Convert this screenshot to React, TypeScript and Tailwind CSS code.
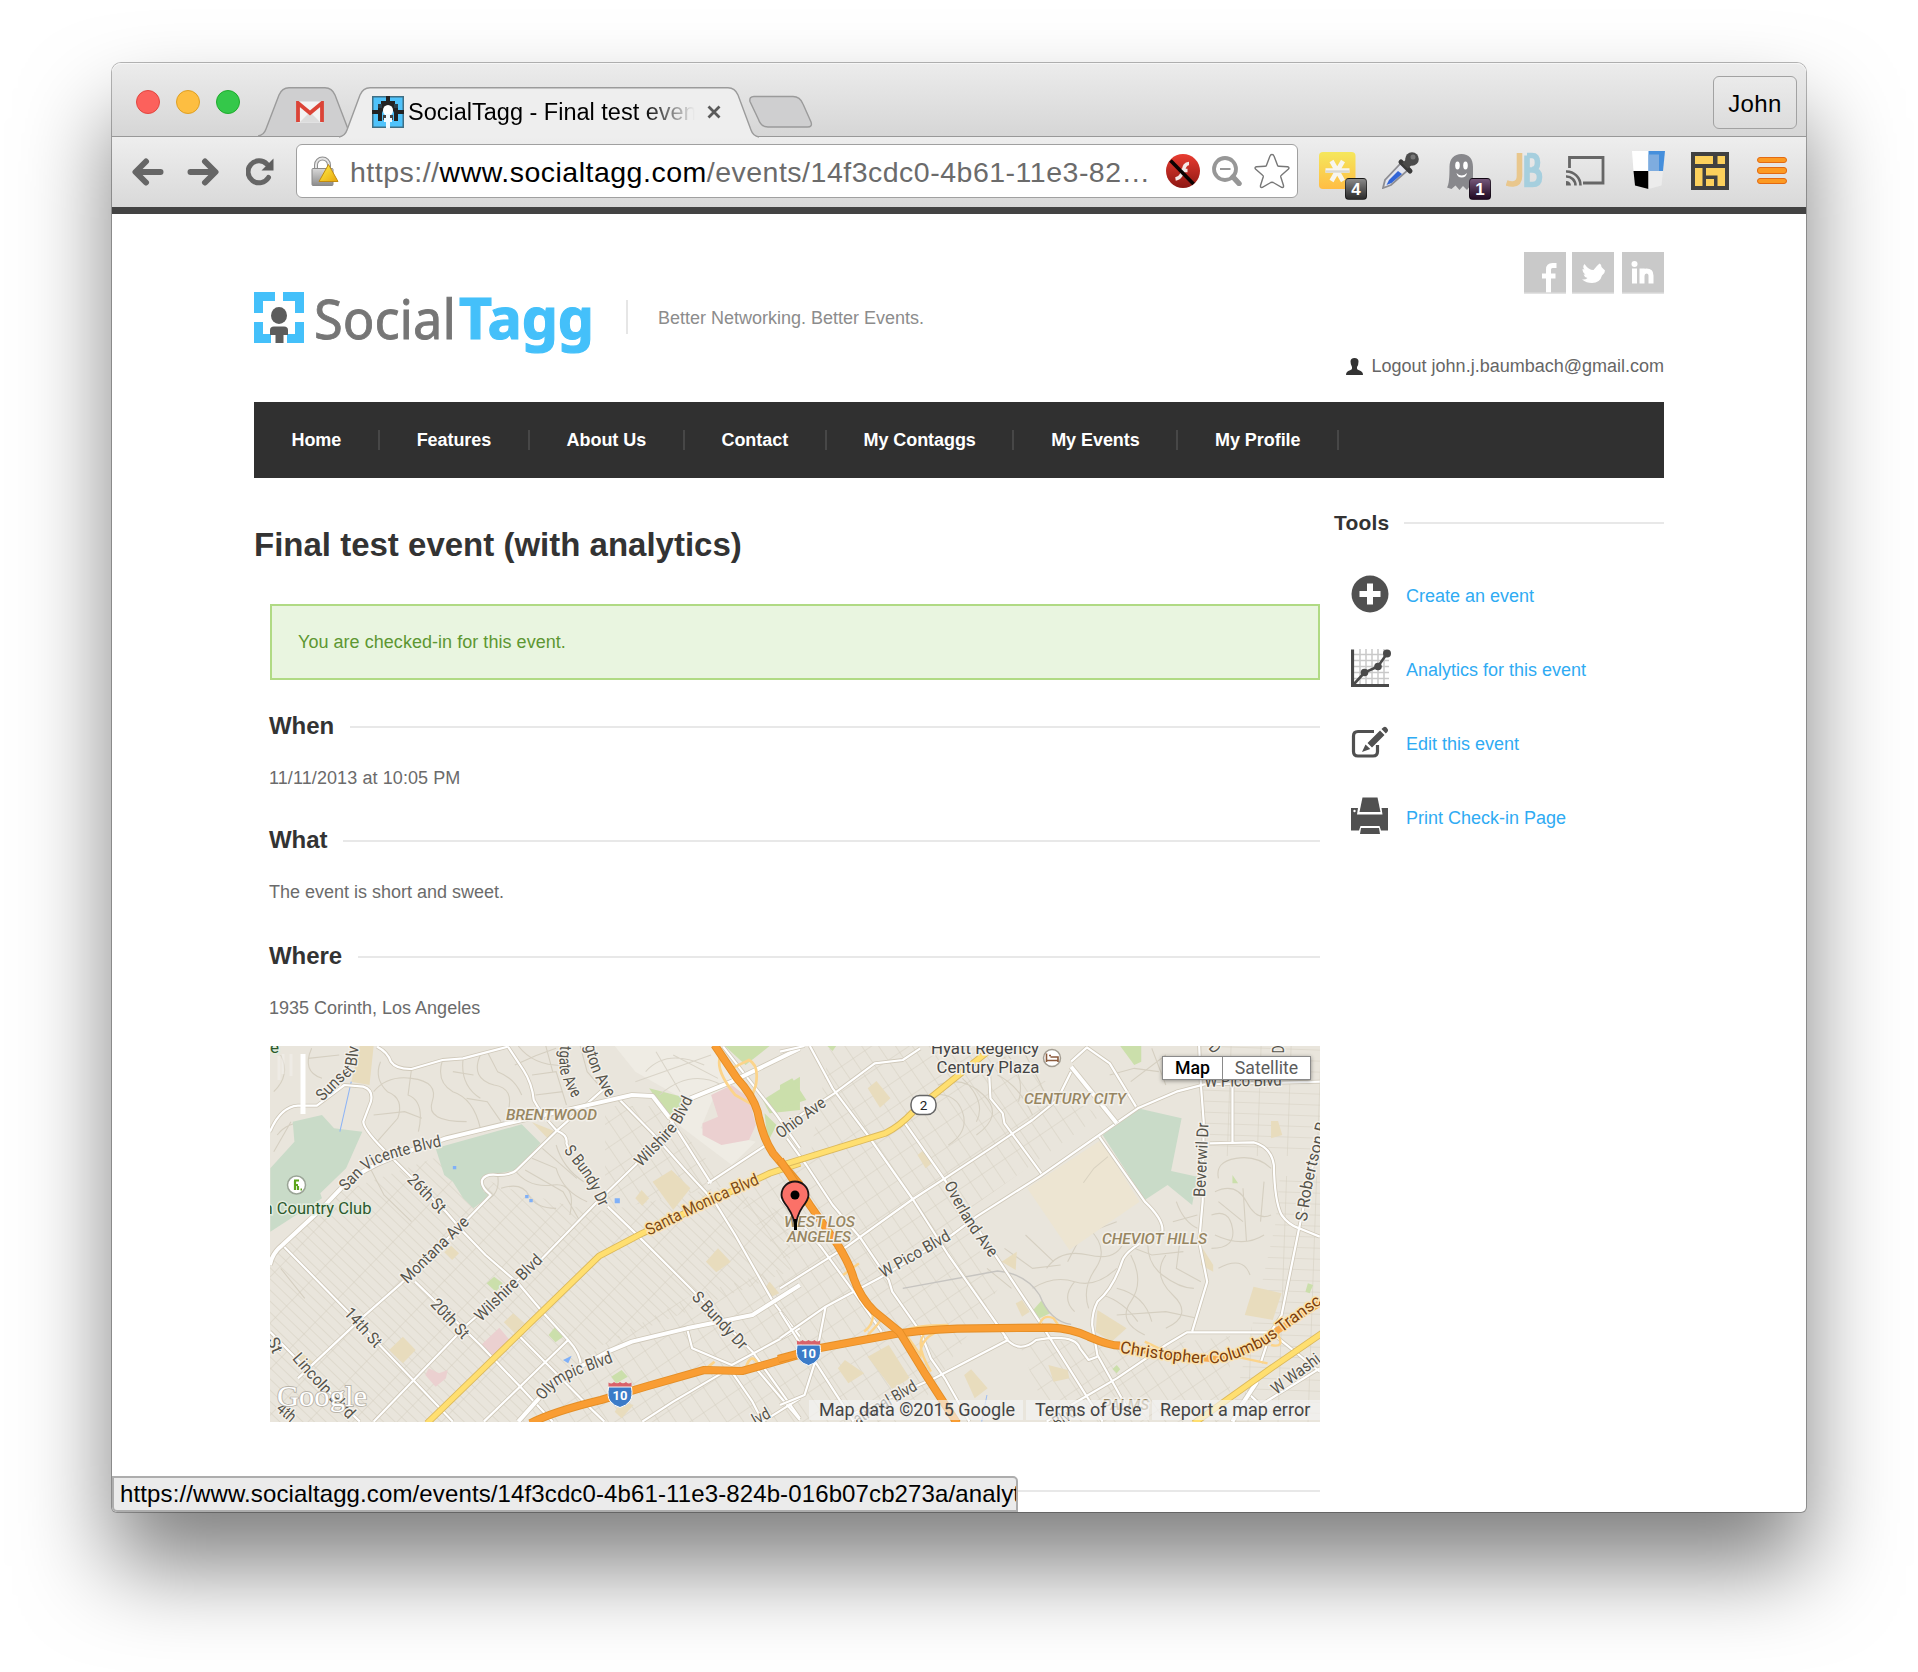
import React from "react";

type Pt = [number, number];
type Side = "l" | "r";

/* ---------- Browser chrome ---------- */

function TabShape({ w, fill, h = 50 }: { w: number; fill: string; h?: number }) {
  return (
    <svg className="absolute left-0 top-0" width={w} height={h + 1} viewBox={`0 0 ${w} ${h + 1}`}>
      <path
        d={`M0 ${h} Q6 ${h - 1} 8 ${h - 7} L21 8 Q24 0.7 31 0.7 H${w - 31} Q${w - 24} 0.7 ${w - 21} 8 L${w - 8} ${h - 7} Q${w - 6} ${h - 1} ${w} ${h}`}
        fill={fill}
        stroke="#9b9b9b"
        strokeWidth="1.4"
      />
    </svg>
  );
}

function Favicon() {
  return (
    <svg width="32" height="32" viewBox="0 0 32 32" className="shrink-0">
      <rect width="32" height="32" fill="#3f6f85" />
      <rect x="1.5" y="1.5" width="29" height="29" fill="#4fc3fb" />
      <path d="M14 0h4v5h5v3h3v6h6v4h-6v7h-4v-8l-2-5h-8l-2 5v8H6v-7H0v-4h6V8h3V5h5z" fill="#222" />
      <path d="M6 8h4v4H6zM22 8h4v4h-4z" fill="#2b3f4a" />
      <ellipse cx="16" cy="14.500" rx="5" ry="5.500" fill="#fff" />
      <path d="M11 19h3v5h-3zM18 19h3v5h-3z" fill="#444" />
      <path d="M14 18h4v4h2v4h-2v6h-4v-6h-2v-4h2z" fill="#eef9ff" />
    </svg>
  );
}

function Gmail() {
  return (
    <svg width="28" height="22" viewBox="0 0 28 22">
      <rect x="1" y="0.5" width="26" height="21" rx="1.5" fill="#f3f3f3" />
      <path d="M4 21 14 11l10 10z" fill="#dcdcdc" />
      <path d="M2 21V2l12 10L26 2v19" fill="none" stroke="#db4437" strokeWidth="3.8" />
    </svg>
  );
}

function TabStrip() {
  return (
    <div className="relative flex h-[74px] items-start rounded-t-[9px] border-b border-[#989898] bg-gradient-to-b from-[#ececec] to-[#d6d6d6] shadow-[inset_0_1px_0_#f6f6f6]">
      <div className="mt-[27px] ml-6 flex gap-4">
        <span className="size-6 rounded-full border border-[#e2463f] bg-[#fc615c]" />
        <span className="size-6 rounded-full border border-[#dfa023] bg-[#fdbe41]" />
        <span className="size-6 rounded-full border border-[#1eac2c] bg-[#34c84a]" />
      </div>
      <div className="relative mt-[24px] ml-[18px] flex h-[50px] w-[98px] items-start justify-center">
        <TabShape w={98} fill="#cfcfd0" h={49} />
        <span className="relative mt-[14px] ml-[6px]">
          <Gmail />
        </span>
      </div>
      <div className="relative z-10 -ml-[17px] mt-[24px] flex h-[52px] w-[420px] items-start">
        <TabShape w={420} fill="#eeeeee" h={50} />
        <div className="relative mt-[9px] ml-[33px] flex w-full items-center">
          <Favicon />
          <span className="ml-1 w-[287px] overflow-hidden whitespace-nowrap font-['Liberation_Sans'] text-[23.5px] leading-8 text-black [mask-image:linear-gradient(to_right,#000_82%,transparent_100%)]">
            SocialTagg - Final test event
          </span>
          <svg width="14" height="14" viewBox="0 0 14 14" className="ml-3">
            <path d="M1.5 1.5l11 11M12.500 1.500l-11 11" stroke="#5a5a5a" strokeWidth="2.8" />
          </svg>
        </div>
      </div>
      <svg width="68" height="34" viewBox="0 0 68 34" className="mt-[32px] -ml-[11px]">
        <path
          d="M6 1.500H45q7 0 10 7.500l8 18q1.700 5-3.500 5H20q-7 0-9.500-7.500L2 6.500Q1 1.500 6 1.500z"
          fill="#cfcfd0"
          stroke="#9b9b9b"
          strokeWidth="1.4"
        />
      </svg>
      <button className="mt-[13px] mr-[9px] ml-auto h-[53px] w-[84px] rounded-[6px] border border-[#a2a2a2] bg-gradient-to-b from-[#ebebeb] to-[#dcdcdc] pt-[2px] font-['Liberation_Sans'] text-[24px] tracking-[0.4px] text-black">
        John
      </button>
    </div>
  );
}

function ArrowIcon({ flip = false }: { flip?: boolean }) {
  return (
    <svg width="32" height="28" viewBox="0 0 32 28" className={flip ? "-scale-x-100" : ""}>
      <path d="M4 14h24.500M14 3.500 3.500 14 14 24.500" fill="none" stroke="#666" strokeWidth="6" strokeLinecap="round" strokeLinejoin="round" />
    </svg>
  );
}

function ReloadIcon() {
  return (
    <svg width="28" height="28" viewBox="0 0 28 28">
      <path d="M22.500 19.500A11 11 0 1 1 21 6.200" fill="none" stroke="#666" strokeWidth="5" strokeLinecap="round" />
      <path d="M27.500 0.500V12.500H15.500z" fill="#5f5f5f" />
    </svg>
  );
}

function LockIcon() {
  return (
    <svg width="28" height="31" viewBox="0 0 28 31">
      <defs>
        <linearGradient id="lock" x1="0" y1="0" x2="0" y2="1">
          <stop offset="0" stopColor="#d8d8d8" />
          <stop offset="1" stopColor="#8c8c8c" />
        </linearGradient>
        <linearGradient id="warn" x1="0" y1="0" x2="1" y2="1">
          <stop offset="0" stopColor="#fff04a" />
          <stop offset="1" stopColor="#e8a70c" />
        </linearGradient>
      </defs>
      <path d="M5 13V9a6.500 6.500 0 0 1 13 0v4" fill="none" stroke="#8e8e8e" strokeWidth="4" />
      <path d="M5 13V9a6.500 6.500 0 0 1 13 0v4" fill="none" stroke="#e4e4e4" strokeWidth="2" />
      <rect x="1" y="12.500" width="21" height="17" rx="1" fill="url(#lock)" stroke="#8a8a8a" />
      <path d="M17.500 8.500 27 25.500H8z" fill="url(#warn)" stroke="#c08a10" strokeLinejoin="round" />
    </svg>
  );
}

function OmniIcons() {
  return (
    <div className="flex items-center">
      <svg width="34" height="34" viewBox="0 0 34 34">
        <defs>
          <linearGradient id="flash" x1="0" y1="0" x2="0" y2="1">
            <stop offset="0" stopColor="#e93c31" />
            <stop offset="1" stopColor="#8e1713" />
          </linearGradient>
        </defs>
        <circle cx="17" cy="17" r="17" fill="url(#flash)" />
        <path d="M23 9.500c-6 0-4.500 7-7.500 11-1.500 3-3 4-6 4.500M15 16.500h6.500" fill="none" stroke="#f4e9e8" strokeWidth="3.400" />
        <path d="M4.500 6.500 27.500 30" stroke="#0a0202" strokeWidth="3.600" />
      </svg>
      <svg width="30" height="30" viewBox="0 0 30 30" className="ml-3">
        <circle cx="13" cy="13" r="11" fill="none" stroke="#979797" strokeWidth="3.800" />
        <path d="M8 13h10.500" stroke="#979797" strokeWidth="2" />
        <path d="M21 21l6 6.500" stroke="#979797" strokeWidth="5.500" strokeLinecap="round" />
      </svg>
      <svg width="36" height="36" viewBox="0 0 36 36" className="ml-3">
        <path
          d="M18 1.500q1.500 0 2 1.500l3.500 9.300q.3 1 1.500 1l8.500.5q2.500.5.700 2.500l-6.800 5.900q-.9.700-.6 1.800l2.700 8.500q.4 2.500-1.900 1.900l-8.400-4.900q-1.200-.6-2.400 0l-8.400 4.900q-2.300.6-1.900-1.900l2.700-8.500q.3-1.100-.6-1.800l-6.800-5.900q-1.800-2 .7-2.500l8.500-.5q1.200 0 1.500-1l3.500-9.300q.5-1.500 2-1.500z"
          fill="#fff"
          stroke="#777"
          strokeWidth="1.400"
        />
      </svg>
    </div>
  );
}

function Badge({ text, cls }: { text: string; cls: string }) {
  return (
    <span className={`absolute right-0 -bottom-[12px] flex h-[22px] w-[22px] items-center justify-center rounded-[4px] border border-black/50 font-['Liberation_Sans'] text-[17px] leading-none font-bold text-white ${cls}`}>
      {text}
    </span>
  );
}

function Extensions() {
  return (
    <div className="ml-[21px] flex h-[38px] items-center">
      <div className="relative h-[36px] w-[48px]">
        <svg width="37" height="37" viewBox="0 0 37 37">
          <defs>
            <linearGradient id="yel" x1="0" y1="0" x2="0" y2="1">
              <stop offset="0" stopColor="#f5e75c" />
              <stop offset="1" stopColor="#ffbd44" />
            </linearGradient>
          </defs>
          <rect width="36.500" height="37" rx="4" fill="url(#yel)" />
          <path d="M6.500 18.500h24M12.500 9l11.500 20M24 9 12.500 29" stroke="#f7f5ee" strokeWidth="4.600" />
          <path d="M6.500 19.500h24" stroke="#d9d8d2" strokeWidth="2.400" />
        </svg>
        <Badge text="4" cls="bg-gradient-to-b from-[#8a8a8a] to-[#2c2c2c]" />
      </div>
      <svg width="37" height="37" viewBox="0 0 37 37" className="ml-[15px]">
        <path d="M1 36 3 28 19 11l7 7L9 33z" fill="#e3e5ee" stroke="#8d8d92" strokeWidth="1.800" />
        <path d="M4.500 33 7 28l9-9 4 3-10.500 9z" fill="#3265d6" />
        <path d="M19 10l9 9" stroke="#3a3a3a" strokeWidth="5" strokeLinecap="round" />
        <path d="M23 14 29 8" stroke="#4a4a4a" strokeWidth="8" />
        <circle cx="30" cy="7" r="6.800" fill="#4c4c4c" />
        <circle cx="31" cy="5" r="2.500" fill="#777" />
      </svg>
      <div className="relative ml-[28px] h-[36px] w-[44px]">
        <svg width="27" height="37" viewBox="0 0 27 37" className="mt-[2px]">
          <path d="M2.500 13C2.500 5 7 0 14.500 0S26 5 26 13v22l-3-3-3 4-4-4-3.500 4-4-4.500-4 3.500L0 33.500c2-3 2.500-10 2.500-20.500z" fill="#88888c" />
          <ellipse cx="10.500" cy="11.500" rx="2.300" ry="4" fill="#fff" />
          <ellipse cx="18.500" cy="11.500" rx="2.300" ry="4" fill="#fff" />
          <path d="M9.500 19q5 5 10.500 0-1 4.500-5.300 4.500T9.500 19z" fill="#fff" />
        </svg>
        <Badge text="1" cls="bg-gradient-to-b from-[#76587a] to-[#210a23]" />
      </div>
      <svg width="37" height="36" viewBox="0 0 37 36" className="ml-[15px]">
        <path d="M13.500 1V24Q13.500 31.500 7 32 4 32.200.500 31" fill="none" stroke="#e9c78d" strokeWidth="5.600" />
        <path d="M21 3.500V32.500H26.500Q33.500 32.500 33.500 25 33.500 18 26 18H21M21 3.500H26Q31.500 3.500 31.500 10.500 31.500 17.500 26 17.500" fill="none" stroke="#a6cfde" strokeWidth="5.600" />
      </svg>
      <svg width="39" height="30" viewBox="0 0 39 30" className="mt-[2px] ml-[23px]">
        <path d="M3.500 12V1.500H37V27H17" fill="none" stroke="#666" strokeWidth="2.800" />
        <path d="M0 15.500A14 14 0 0 1 14.500 29.500M0 20.500A9 9 0 0 1 9.500 29.500" fill="none" stroke="#666" strokeWidth="2.600" />
        <path d="M0 25a5 5 0 0 1 5 4.500H0z" fill="#666" />
      </svg>
      <svg width="33" height="38" viewBox="0 0 33 38" className="ml-[27px]">
        <path d="M0 0h17v20H1.500z" fill="#fff" />
        <path d="M16.500 0H33l-2 20H16.500z" fill="#458fdc" />
        <path d="M16.500 3.500H27V20H16.500z" fill="#7eacdf" />
        <path d="M1.500 20h15v18L3 34.500z" fill="#000" />
        <path d="M16.500 20H31l-1.500 14.500-13 3.500z" fill="#ececec" />
      </svg>
      <svg width="38" height="38" viewBox="0 0 38 38" className="mt-px ml-[26px]">
        <rect width="38" height="38" fill="#414141" />
        <path d="M4 4h18v8H4zM26.500 4H34v8h-7.500zM4 16h7.500v18H4zM15 16h19v18h-7.500V23.500H15zM15 27h8v7h-8z" fill="#fcd05c" />
      </svg>
      <div className="mt-px ml-[28px] flex w-[30px] flex-col gap-1">
        <span className="h-[6.500px] rounded-[3px] border border-[#e36a12] bg-[#fc9a22]" />
        <span className="h-[6.500px] rounded-[3px] border border-[#e36a12] bg-[#fc9a22]" />
        <span className="h-[6.500px] rounded-[3px] border border-[#e36a12] bg-[#fc9a22]" />
      </div>
    </div>
  );
}

function Toolbar() {
  return (
    <div className="flex h-[70px] items-start bg-gradient-to-b from-[#eeeeee] to-[#d9d9d9]">
      <div className="mt-[21px] ml-[20px] flex w-[164px] shrink-0">
        <ArrowIcon />
        <span className="ml-[23px]">
          <ArrowIcon flip />
        </span>
        <span className="ml-[27px]">
          <ReloadIcon />
        </span>
      </div>
      <div className="mt-[7px] flex h-[54px] w-[1002px] shrink-0 items-center rounded-[6px] border-[1.500px] border-[#a0a0a0] bg-white pr-[6px] pl-[14px]">
        <LockIcon />
        <span className="mt-[2px] ml-[11px] w-[816px] whitespace-nowrap font-['Liberation_Sans'] text-[28.500px] leading-none tracking-[0.500px] text-[#6b6b6b]">
          https://<span className="text-black">www.socialtagg.com</span>/events/14f3cdc0-4b61-11e3-82…
        </span>
        <OmniIcons />
      </div>
      <div className="mt-[14px]">
        <Extensions />
      </div>
    </div>
  );
}

/* ---------- Site header ---------- */

function Logo() {
  return (
    <svg width="340" height="66" viewBox="0 0 340 66" className="overflow-visible">
      <path d="M0 0H21V9H9V21H0zM29 0H50V21H41V9H29zM0 30H9V42H17V51H0zM41 30H50V51H33V42H41z" fill="#44c0fa" />
      <ellipse cx="25" cy="23.500" rx="8" ry="8.500" fill="#5c5c5c" />
      <path d="M16 43V38q0-3.500 4-3.500h10q4 0 4 3.500v5h-4.500v8h-8v-8z" fill="#5c5c5c" />
      <text x="60" y="46.500" fontFamily="Noto Sans" fontSize="55" fill="#767676" stroke="#767676" strokeWidth="0.900" textLength="142" lengthAdjust="spacingAndGlyphs">
        Social
      </text>
      <text x="205" y="46.500" fontFamily="Noto Sans" fontWeight="700" fontSize="58" fill="#44c0fa" stroke="#44c0fa" strokeWidth="1.200" textLength="135" lengthAdjust="spacingAndGlyphs">
        Tagg
      </text>
    </svg>
  );
}

function SiteHeader() {
  return (
    <header className="flex h-[188px] justify-between">
      <div className="flex items-start pt-[78px]">
        <Logo />
        <span className="mt-[8px] ml-[32px] h-[34px] w-[2px] bg-[#e6e6e6]" />
        <span className="mt-[14px] ml-[30px] text-[18px] leading-6 text-[#8c8c8c]">Better Networking. Better Events.</span>
      </div>
      <div className="flex flex-col items-end pt-[38px]">
        <div className="flex">
          <svg width="42" height="42" viewBox="0 0 42 42">
            <rect width="42" height="42" fill="#c9c9c9" />
            <path d="M32.500 13.500h-4q-4 0-4 4v23M18 24h13.500" fill="none" stroke="#fff" strokeWidth="5" />
            <rect y="40.500" width="42" height="1.500" fill="#e2e2e2" />
          </svg>
          <svg width="42" height="42" viewBox="0 0 42 42" className="ml-[6px]">
            <rect width="42" height="42" fill="#c9c9c9" />
            <path
              d="M10 27.500q3.500.5 5.500-1.500-3-.5-4-3.500h2q-3-2-3-5.500l2 .5q-2.500-2.500 0-5.500 4 6 9 6 3-4 6-6.500 2 .5 2 3.500l3.500 3.500q0 3-3 5Q28 31 20 31q-5.500 0-10-3.500z"
              fill="#fff"
            />
            <rect y="40.500" width="42" height="1.500" fill="#e2e2e2" />
          </svg>
          <svg width="42" height="42" viewBox="0 0 42 42" className="ml-[8px]">
            <rect width="42" height="42" fill="#c9c9c9" />
            <circle cx="12.500" cy="12" r="3" fill="#fff" />
            <path d="M12.500 16.500V31.500M20 31.500V16.500M20 24q0-5 4.500-5t4.500 4.500v8" fill="none" stroke="#fff" strokeWidth="5" />
            <rect y="40.500" width="42" height="1.500" fill="#e2e2e2" />
          </svg>
        </div>
        <div className="mt-[60px] flex items-center">
          <svg width="17" height="17" viewBox="0 0 17 17" className="mr-[9px]">
            <path d="M4.500 3.500Q4.500 0 8.500 0T12.500 3.500 11 9v1.500q0 1 2 1.700 4 1 4 4.800H0q0-3.800 4-4.800 2-.7 2-1.700V9Q4.500 6.500 4.500 3.500z" fill="#333" />
          </svg>
          <span className="text-[18px] leading-6 text-[#666]">Logout john.j.baumbach@gmail.com</span>
        </div>
      </div>
    </header>
  );
}

const NAV = ["Home", "Features", "About Us", "Contact", "My Contaggs", "My Events", "My Profile"];

function Nav() {
  return (
    <nav className="flex h-[76px] items-center bg-[#303030]">
      {NAV.map((n) => (
        <span key={n} className="flex h-5 items-center border-r-2 border-[#474747] px-[36.700px] text-[18px] font-bold tracking-[-0.060px] text-white first:pl-[37.500px]">
          {n}
        </span>
      ))}
    </nav>
  );
}

/* ---------- Map ---------- */

const LEFT_T = "matrix(0.34435 0 0 0.33333 -10 -11)";
const RIGHT_T = "matrix(0.35075 0 0 0.33333 510 -11)";

const toLocal = (s: Side, [x, y]: Pt): Pt => (s === "l" ? [x * 0.34435 - 10, y / 3 - 11] : [x * 0.35075 + 510, y / 3 - 11]);

const leftParks = [
  "M30,400 L100,320 L95,260 L180,240 L215,280 L297,290 L250,400 L175,475 L180,490 L30,590z",
  "M510,340 L760,268 L815,325 L745,405 L645,425 L650,470 L670,480 L620,520 L590,490 L560,440 L535,420z",
];
const rightParks = ["M920,300 L1020,220 L1145,250 L1115,408 L1190,425 L1175,510 L1105,450 L1040,495z"];

const leftGreen = ["M1130,160 L1225,185 L1220,225 L1190,250z", "M1460,195 L1568,125 V225 L1480,235z", "M1350,33 H1480 L1410,90z", "M1465,235 L1500,270 L1475,320z", "M680,725 L705,745 L685,770 L658,745z", "M855,878 L880,905 L858,922 L838,900z", "M1050,1005 L1068,1025 L1035,1045 L1020,1025z"];
const rightGreen = ["M0,150 L35,130 L75,195 L0,220z", "M970,33 H1030 V80 L1010,90z", "M745,797 L770,835 L740,850 L722,825z", "M1290,420 L1306,445 H1290z", "M1505,745 L1520,750 L1510,775 L1498,770z", "M960,990 L970,1003 L960,1015 L948,1002z", "M135,33 H160 L150,48z"];
const leftTan = ["M290,33 H330 L318,150 L265,140z", "M1140,440 L1195,405 L1250,460 L1200,525z", "M415,905 L452,945 L415,985 L375,945z", "M735,835 L768,865 L740,895 L708,862z", "M1330,640 L1367,680 L1325,712 L1295,680z", "M790,262 L860,290 L835,310z", "M555,632 L578,655 L558,675 L535,652z", "M1108,465 L1130,490 L1110,512 L1090,490z", "M110,945 L160,985 L145,1000 L105,975z", "M1050,1100 L1085,1110 L1050,1150 L1030,1130z", "M1480,740 L1508,775 L1485,785 L1465,760z"];
const rightTan = ["M1350,755 L1430,775 L1405,855 L1325,840z", "M905,825 L988,880 L945,920 L900,890z", "M310,930 L370,1030 L320,1062 L250,965z", "M545,1003 L592,1060 L555,1090 L525,1020z", "M250,160 L275,138 L315,190 L285,218z", "M410,345 L433,385 L415,400 L392,360z", "M675,650 L672,705 L632,680z", "M185,975 L240,1015 L195,1045 L165,1000z", "M690,795 L712,830 L690,845 L672,805z", "M765,990 L820,1005 L825,1030 L780,1040z", "M1400,258 H1420 L1432,300 L1400,310z", "M1205,640 L1235,690 V710 L1200,690z"];
const leftPink = ["M1310,180 L1370,150 L1420,190 L1440,270 L1420,315 L1340,330 L1285,300 L1285,265 L1330,245z", "M695,878 L725,915 L680,965 L642,930z", "M490,1000 L520,1015 L545,1005 L540,1030 L510,1055 L480,1020z"];
const leftPale = ["M1030,33 H1310 L1400,170 L1320,180 L1280,280 L1440,320 L1370,390 L1190,250 L1225,190 L1090,110z"];

/* Curved residential lanes in the hilly parts of town. */
const leftLanes = [
  "M60,60 Q90,120 40,170 M150,40 Q120,110 180,130 M140,70 L230,60 M50,300 Q80,260 140,260 M40,350 L90,260",
  "M330,170 Q370,120 440,130 Q520,140 500,200 T600,260 M350,80 Q330,130 370,170 Q420,190 400,250 L340,320",
  "M440,102 L430,180 Q480,200 460,290 M530,75 Q510,140 560,170 Q620,190 640,280 M590,70 Q580,150 640,190 M640,60 Q610,130 680,150 Q740,160 720,230",
  "M660,50 L690,110 Q740,130 760,180 M600,190 L660,200 L700,260 M560,110 L620,120 M330,240 L420,230 L470,250",
  "M740,90 Q800,60 860,40 M790,120 L860,110 L890,210 M800,180 L880,170 M750,33 Q800,100 900,90 M930,33 L950,110 L1000,170 M830,33 L850,110",
  "M690,420 Q700,480 650,500 M740,405 Q780,460 850,450 T900,540 M700,460 Q760,440 780,480 T860,520 M860,330 Q880,400 940,440 M770,405 L880,470 L930,560",
  "M820,340 L920,430 M790,370 L860,400 Q880,470 950,500 M320,400 L360,480 L440,560 M60,700 L130,790",
];
const rightLanes = [
  "M650,60 Q700,130 680,200 M620,120 Q680,150 720,240 M700,60 L740,140 Q760,200 800,200 M450,150 Q520,120 580,180 T560,300 M430,180 Q500,170 520,230 T480,330 M520,130 Q590,200 560,260",
  "M760,700 Q800,640 880,660 T980,620 M720,760 Q780,720 840,740 T960,700 M840,830 Q800,790 840,740 M880,820 Q860,760 900,700 T880,580 M820,680 L860,600 L960,560",
  "M1100,660 Q1060,720 1120,780 T1100,880 M1000,660 Q1040,740 1000,800 T1040,900 M1050,600 Q1040,680 1090,720 T1180,760 M960,760 Q1040,780 1060,860 M1140,620 L1130,700 L1200,740",
  "M920,780 Q980,800 1020,860 M1010,640 L1060,660 L1150,650 M1120,560 L1190,540 M1130,500 Q1150,560 1190,580 M960,840 L1100,830 L1190,850",
  "M1240,470 Q1300,440 1330,500 T1400,540 M1230,540 Q1280,520 1290,580 T1230,640 M1240,600 Q1320,640 1380,600 M1250,430 Q1240,380 1300,370 T1400,400 M1320,460 L1330,620 M1380,440 L1370,560 M1250,700 Q1320,660 1340,720 M1250,500 L1320,560",
  "M700,600 L780,680 M640,640 L720,700 L800,690 M590,700 L660,760 M1000,140 L1100,60 M1060,40 L1100,150 M940,120 L1010,100 L1080,110",
];

const leftRoads = [
  "M340,35 Q370,50 380,80 Q395,103 440,102 Q480,90 530,75 L590,70 L720,35",
  "M720,35 L765,105 Q790,145 795,195 Q815,235 862,287 Q895,300 890,325 L900,350 M1010,515 L1100,605 L1250,760 L1430,950 L1568,1150",
  "M29,290 Q60,215 110,212 L165,212 L245,150 L300,155 Q330,165 322,200 L300,260 Q300,285 380,365 L540,530 L590,590 L655,660 L750,745 L820,830 L895,915 Q935,960 932,1000",
  "M110,1030 L300,845 L410,745 L600,555 L670,480 Q640,455 645,435 Q655,415 690,420 Q730,420 745,405 L862,287 L1000,160",
  "M330,1160 L600,870 L820,670 L975,505 L1090,390 L1255,190",
  "M65,630 L255,830 L440,1030 L560,1160",
  "M450,740 L640,930 L760,1060 L850,1160",
  "M29,890 L190,1060 L290,1160",
  "M650,1160 L895,915 M755,905 L970,1130 L1000,1160",
  "M1110,1160 L1200,1100 L1340,1015 M1240,880 L1255,940 L1370,990 L1568,880",
  "M1370,1010 L1430,1100 L1460,1160 M1440,1000 L1568,1155",
  "M1345,35 L1500,240 L1568,340",
  "M1040,190 L1140,295 L1230,400 L1320,500 L1380,600 L1490,800 L1568,905",
  "M1190,250 L1310,445 M1300,445 L1470,330",
  "M1460,1160 L1568,1090",
];
const leftBigRoads = [
  "M29,690 Q35,655 65,630 L180,520 L240,455 Q300,400 380,370 Q460,335 540,310 L720,265 L920,218 L1080,180 L1140,183 L1190,250",
  "M1250,190 L1370,140 L1568,40",
  "M750,1160 L810,1090 L850,1040 L1010,950 L1080,920 L1240,880 L1430,840 L1568,750",
];
const rightRoads = [
  "M85,33 L150,160 L250,300 L380,495 L480,660 L650,915",
  "M355,262 L470,435 L620,670 L740,860 L890,1110 L920,1160",
  "M595,90 L600,190 L635,235 L640,265 L745,415",
  "M0,910 L130,815 L210,770 L290,725 L490,600 L560,545 L740,425 L910,300 L1020,220 L1130,170 L1210,148 L1539,140",
  "M0,760 L190,635 L375,495 L470,430 L600,340 L720,255 L790,195 L830,110",
  "M0,280 L155,175 L270,85 L350,75 L400,40 M0,50 L70,33",
  "M20,310 L75,390 L150,510 L230,610 L310,735 L320,770 L400,890 L430,970 L470,1030 L540,1160",
  "M910,305 L1040,500 Q1095,555 1090,590 Q985,640 975,680 Q950,760 905,800 Q890,830 890,870 L905,960 L990,1120",
  "M875,37 L940,85 L1015,215 M875,37 L830,80",
  "M1195,33 L1200,150 L1208,260 L1205,500 L1195,620 L1218,740 L1175,890",
  "M1290,140 V320 M1225,325 L1350,322 Q1400,335 1408,390 Q1410,500 1430,540 Q1450,570 1480,580 L1539,605",
  "M1539,300 L1500,480 L1480,580 L1430,840 L1400,890 L1370,985",
  "M1100,930 L1160,892 H1400 L1480,960 L1539,1010 M1100,930 L960,1030 L830,1110 L760,1160",
  "M440,1030 L650,915 M640,905 Q680,960 730,915 Q840,895 855,940 L880,975 L905,965 M440,1030 L200,1140",
  "M130,815 L100,980 L70,1080 L0,1110 M100,980 L210,1160",
  "M0,490 L120,640 L210,770 L290,890 M0,830 L90,980",
  "M1539,1000 L1370,1110 L1330,1070",
];
const rightBigRoads = ["M830,95 L960,265", "M1360,1040 L1310,1120 L1290,1160"];

function Streets({ paths, width }: { paths: string[]; width: number }) {
  return (
    <>
      {paths.map((d) => (
        <path key={"c" + d} d={d} fill="none" stroke="#cfc8b9" strokeWidth={width + 1.6} vectorEffect="non-scaling-stroke" strokeLinejoin="round" />
      ))}
      {paths.map((d) => (
        <path key={d} d={d} fill="none" stroke="#fff" strokeWidth={width} vectorEffect="non-scaling-stroke" strokeLinejoin="round" />
      ))}
    </>
  );
}

function Lanes({ paths }: { paths: string[] }) {
  return (
    <>
      {paths.map((d) => (
        <path key={d} d={d} fill="none" stroke="#d5cfc1" strokeWidth="1.1" vectorEffect="non-scaling-stroke" />
      ))}
    </>
  );
}

function Highway({ d, fill, casing, width }: { d: string; fill: string; casing: string; width: number }) {
  return (
    <>
      <path d={d} fill="none" stroke={casing} strokeWidth={width + 1.8} vectorEffect="non-scaling-stroke" strokeLinejoin="round" />
      <path d={d} fill="none" stroke={fill} strokeWidth={width} vectorEffect="non-scaling-stroke" strokeLinejoin="round" />
    </>
  );
}

function Areas({ paths, fill }: { paths: string[]; fill: string }) {
  return (
    <>
      {paths.map((d) => (
        <path key={d} d={d} fill={fill} />
      ))}
    </>
  );
}

/* Street names follow a baseline given by its points. */
const LABELS: { t: string; s: Side; p: Pt[]; c?: string }[] = [
  { t: "Sunset Blv", s: "l", p: [[182, 200], [240, 140], [276, 105], [287, 33]] },
  { t: "San Vicente Blvd", s: "l", p: [[250, 470], [330, 393], [440, 355], [530, 333]] },
  { t: "26th St", s: "l", p: [[425, 436], [522, 539]] },
  { t: "Montana Ave", s: "l", p: [[428, 748], [611, 563]] },
  { t: "Wilshire Blvd", s: "l", p: [[642, 862], [824, 677]] },
  { t: "Wilshire Blvd", s: "l", p: [[1107, 397], [1207, 287], [1258, 192]] },
  { t: "14th St", s: "l", p: [[242, 836], [335, 942]] },
  { t: "20th St", s: "l", p: [[493, 809], [589, 916]] },
  { t: "Lincoln Blvd", s: "l", p: [[93, 972], [160, 1050], [258, 1155]] },
  { t: "4th", s: "l", p: [[45, 1125], [90, 1165]] },
  { t: "St", s: "l", p: [[20, 915], [38, 960]] },
  { t: "S Bundy Dr", s: "l", p: [[882, 348], [942, 428], [987, 518]] },
  { t: "S Bundy Dr", s: "l", p: [[1252, 788], [1397, 948]] },
  { t: "Olympic Blvd", s: "l", p: [[822, 1097], [882, 1040], [1028, 980]] },
  { t: "tgate Ave", s: "l", p: [[872, 33], [872, 110], [908, 192]] },
  { t: "gton Ave", s: "l", p: [[943, 33], [965, 110], [1008, 190]] },
  { t: "Santa Monica Blvd", s: "l", p: [[1130, 602], [1292, 519], [1453, 445]], c: "#7d4a14" },
  { t: "lvd", s: "l", p: [[1440, 1172], [1487, 1145]] },
  { t: "Ohio Ave", s: "r", p: [[2, 312], [135, 210]] },
  { t: "Overland Ave", s: "r", p: [[467, 450], [526, 562], [600, 670]] },
  { t: "W Pico Blvd", s: "r", p: [[295, 730], [490, 612]] },
  { t: "W Pico Blvd", s: "r", p: [[1210, 156], [1432, 152]] },
  { t: "Beverwil Dr", s: "r", p: [[1212, 487], [1222, 262]] },
  { t: "S Robertson B", s: "r", p: [[1502, 560], [1522, 430], [1562, 265]] },
  { t: "ational Blvd", s: "r", p: [[220, 1170], [395, 1062]] },
  { t: "W Washi", s: "r", p: [[1415, 1080], [1545, 978]] },
  { t: "Blvd", s: "r", p: [[790, 1180], [850, 1140]] },
  { t: "D", s: "r", p: [[1220, 40], [1238, 60]] },
  { t: "D", s: "r", p: [[1438, 55], [1438, 30]] },
  { t: "Christopher Columbus Transc", s: "r", p: [[968, 953], [1110, 975], [1250, 983], [1370, 938], [1450, 878], [1548, 803]], c: "#7d3f0c" },
];

function StreetLabel({ i }: { i: number }) {
  const l = LABELS[i];
  const pts = l.p.map((p) => toLocal(l.s, p));
  let len = 0;
  for (let k = 1; k < pts.length; k++) len += Math.hypot(pts[k][0] - pts[k - 1][0], pts[k][1] - pts[k - 1][1]);
  let d = `M${pts[0].join(",")}`;
  if (pts.length === 2) d += ` L${pts[1].join(",")}`;
  else {
    for (let k = 1; k < pts.length; k++) {
      const a = pts[Math.max(0, k - 2)];
      const b = pts[k - 1];
      const c = pts[k];
      const e = pts[Math.min(pts.length - 1, k + 1)];
      d += ` C${b[0] + (c[0] - a[0]) / 6},${b[1] + (c[1] - a[1]) / 6} ${c[0] - (e[0] - b[0]) / 6},${c[1] - (e[1] - b[1]) / 6} ${c[0]},${c[1]}`;
    }
  }
  return (
    <>
      <path id={`street-${i}`} d={d} fill="none" />
      <text fontSize={16.5} fill={l.c ?? "#55534a"} stroke={l.c ? "#fbe3b0" : "#f3f0ea"} strokeWidth="3" paintOrder="stroke" strokeLinejoin="round">
        <textPath href={`#street-${i}`} textLength={len - 0.5} lengthAdjust="spacingAndGlyphs">
          {l.t}
        </textPath>
      </text>
    </>
  );
}

function AreaLabel({ t, x, y, w }: { t: string; x: number; y: number; w: number }) {
  return (
    <text x={x} y={y} textLength={w} lengthAdjust="spacingAndGlyphs" fontSize="15.500" fontStyle="italic" fontWeight="500" fill="#978662" stroke="#f3f0ea" strokeWidth="3" paintOrder="stroke">
      {t}
    </text>
  );
}

function Shield({ x, y }: { x: number; y: number }) {
  return (
    <g transform={`translate(${x} ${y})`}>
      <path d="M-11.500 -7Q-13 3 -10 7 -6 12 0 13.500 6 12 10 7 13 3 11.500 -7z" fill="#3b7bc8" stroke="#fff" strokeWidth="1" />
      <path d="M-11.500 -7.500V-11.500Q-8 -9.500 -6 -12 -3 -9.500 0 -12 3 -9.500 6 -12 8 -9.500 11.500 -11.500V-7.500z" fill="#d9626a" />
      <text y="6" textAnchor="middle" fontSize="13" fontWeight="700" fill="#fff">
        10
      </text>
    </g>
  );
}

function EventMap() {
  return (
    <div className="relative h-[376px] w-[1050px] overflow-hidden bg-[#e9e5dc] font-['Roboto']">
      <svg width="1050" height="376" viewBox="0 0 1050 376" fontFamily="Roboto" className="block">
        <defs>
          <pattern id="gridSW" width="8" height="32" patternUnits="userSpaceOnUse" patternTransform="rotate(-46)">
            <path d="M0 0H8M0 0V32" stroke="#d5cfc1" strokeWidth="1.100" fill="none" />
          </pattern>
          <pattern id="gridMid" width="14" height="21" patternUnits="userSpaceOnUse" patternTransform="rotate(-34)">
            <path d="M0 0H14M0 0V21" stroke="#d5cfc1" strokeWidth="1.100" fill="none" />
          </pattern>
          <pattern id="gridE" width="30" height="11" patternUnits="userSpaceOnUse" patternTransform="rotate(2)">
            <path d="M0 0H30M0 0V11" stroke="#d5cfc1" strokeWidth="1.100" fill="none" />
          </pattern>
        </defs>
        <path d="M0 215 60 150 170 110 230 140 300 160 335 165 455 140 520 170 520 225 330 300 250 376H0z" fill="url(#gridSW)" />
        <path d="M335 60 390 60 460 140 540 110 560 0H720L830 70 690 170 730 240 640 376H250L330 300 420 250 520 220 455 140 335 165z" fill="url(#gridMid)" />
        <path d="M930 0H1050V110H930zM1010 130H1050V376H960L1005 180z" fill="url(#gridE)" />
        <path d="M780 376 750 300 830 290 880 300 960 290V376z" fill="url(#gridMid)" />
        <g transform={LEFT_T}>
          <Lanes paths={leftLanes} />
        </g>
        <g transform={RIGHT_T}>
          <Lanes paths={rightLanes} />
        </g>

        <g transform={LEFT_T}>
          <Areas paths={leftPale} fill="#efece4" />
          <Areas paths={leftParks} fill="#c9dbc8" />
          <Areas paths={leftGreen} fill="#cbdfab" />
          <Areas paths={leftTan} fill="#e8dcbd" />
          <Areas paths={leftPink} fill="#ebd0d0" />
          <path d="M265,140 L232,290" stroke="#8db4f5" fill="none" strokeWidth="3" />
          <path d="M1030,490 H1045 V505 H1030zM560,393 h10 v10 h-10zM770,480 h10 v10 h-10zM782,492 h10 v10 h-10zM880,975 L905,962 L895,985z" fill="#7fb0f8" />
          <path d="M1120,110 Q1180,40 1290,90 M1090,140 L1310,60 M1160,180 Q1250,100 1340,150 M1200,60 L1330,130 M1150,50 L1220,170" stroke="#d9d4c8" fill="none" strokeWidth="3" />
        </g>
        <g transform={RIGHT_T}>
          <Areas paths={rightParks} fill="#c9dbc8" />
          <Areas paths={rightGreen} fill="#cbdfab" />
          <Areas paths={rightTan} fill="#e8dcbd" />
          <path d="M915,315 L1025,500 L825,645 L705,460z" fill="#ede5d2" />
          <path d="M865,443 L895,400 L935,365" stroke="#d9d2c0" strokeWidth="3" fill="none" />
          <path d="M350,760 L620,708 Q700,715 740,780 Q770,860 830,868" stroke="#c6c4c0" strokeWidth="4" fill="none" />
          <path d="M590,1080 L575,1160" stroke="#9dbdf2" strokeWidth="3" fill="none" />
        </g>

        <g transform={LEFT_T}>
          <Streets paths={leftRoads} width={2.2} />
          <Streets paths={leftBigRoads} width={4} />
        </g>
        <g transform={RIGHT_T}>
          <Streets paths={rightRoads} width={2.2} />
          <Streets paths={rightBigRoads} width={4} />
        </g>
        <g transform={LEFT_T}>
          <path d="M1335,70 Q1325,110 1380,180 L1440,215 M1370,100 L1420,75 Q1450,90 1440,150 L1430,180 M1410,1000 Q1430,940 1450,1000 M1290,1005 L1320,980" stroke="#fcd48a" strokeWidth="8" fill="none" />
          <Highway d="M485,1165 L985,663 L1110,595 L1480,415 L1568,385" fill="#ffdf70" casing="#dcb95c" width={5} />
        </g>
        <g transform={RIGHT_T}>
          <Highway d="M0,392 L75,368 L300,295 Q340,275 380,230 L580,60 L615,30" fill="#ffdf70" casing="#dcb95c" width={5} />
          <Highway d="M1180,1165 L1400,1000 L1545,895" fill="#ffdf70" casing="#dcb95c" width={5} />
          <path d="M240,890 Q265,870 265,840 M290,850 Q280,870 250,900 M350,890 Q380,870 480,870 M360,900 L400,960 Q400,910 450,890 M430,1010 Q385,930 410,900 M740,870 Q750,835 780,850 L800,880 M180,720 L225,685 M1390,985 L1300,965 M1400,930 Q1440,940 1420,900 L1430,850 M1040,920 L1080,940" stroke="#fcd48a" strokeWidth="7" fill="none" />
          <path d="M1000,938 Q1130,965 1240,972 Q1330,960 1420,885 L1545,800" stroke="#f9ac50" strokeWidth="20" fill="none" />
        </g>
        <g transform={LEFT_T}>
          <Highway d="M785,1165 Q850,1130 990,1095 L1120,1055 L1290,1005 L1400,1008 L1480,985 L1570,958" fill="#f99d33" casing="#e48e26" width={6.4} />
          <Highway d="M1320,30 L1385,130 Q1430,180 1445,230 Q1460,310 1490,355 L1568,450" fill="#f99d33" casing="#e48e26" width={6.4} />
        </g>
        <g transform={RIGHT_T}>
          <Highway d="M-5,972 L110,940 L340,895 Q450,880 560,880 L770,878 Q830,880 880,905 Q940,932 970,932" fill="#f99d33" casing="#e48e26" width={6.4} />
          <Highway d="M0,375 L85,510 L165,630 Q200,690 210,730 Q230,790 270,830 L340,890 L410,1010 L505,1165" fill="#f99d33" casing="#e48e26" width={6.4} />
        </g>

        {LABELS.map((_, i) => (
          <StreetLabel key={i} i={i} />
        ))}
        <AreaLabel t="BRENTWOOD" x={236} y={73.500} w={91} />
        <AreaLabel t="CENTURY CITY" x={754} y={57.500} w={102} />
        <AreaLabel t="CHEVIOT HILLS" x={832} y={197.500} w={105} />
        <AreaLabel t="WEST LOS" x={514} y={181} w={71} />
        <AreaLabel t="ANGELES" x={517} y={196} w={64} />
        <AreaLabel t="PALMS" x={832} y={364} w={47} />

        <g fill="#444" stroke="#f3f0ea" strokeWidth="3" paintOrder="stroke" fontSize="17">
          <text x="661" y="8" textLength="108" lengthAdjust="spacingAndGlyphs">Hyatt Regency</text>
          <text x="666.500" y="27" textLength="103" lengthAdjust="spacingAndGlyphs">Century Plaza</text>
        </g>
        <circle cx="782" cy="12" r="8.500" fill="#fff" stroke="#a39d92" strokeWidth="1.500" />
        <path d="M776.500 7.500V16M776.500 14.500H788V11H780.500M779 9.500h2M788 11V16" stroke="#8b5a3c" strokeWidth="1.600" fill="none" />
        <g fill="#2c5a2c" stroke="#e4ece0" strokeWidth="3" paintOrder="stroke" fontSize="17">
          <text x="-6.500" y="168" textLength="108" lengthAdjust="spacingAndGlyphs">n Country Club</text>
          <text x="0" y="7">e</text>
        </g>
        <circle cx="26.500" cy="139" r="9" fill="#fff" stroke="#9aa496" strokeWidth="1.500" />
        <path d="M24 134.500h5M25 135v9M25 139h3M28 140v4M30.500 143.500h1.500" stroke="#5da51d" strokeWidth="2.200" fill="none" />

        <rect x="641" y="49.500" width="25" height="19" rx="8.500" fill="#fff" stroke="#666" strokeWidth="1.500" />
        <text x="653.500" y="64" textAnchor="middle" fontSize="13.500" fill="#222">2</text>
        <Shield x={350} y={348} />
        <Shield x={538.500} y={306} />

        <path d="M525.500 184Q525 172 517.500 161 511.500 153.500 511.500 149a13.500 13.500 0 0 1 27 0q0 4.500-6 12-6.500 9-7 23z" fill="#fb7168" stroke="#1c1414" strokeWidth="1.800" />
        <circle cx="525" cy="149" r="4.500" fill="#000" />
        <path d="M525.500 173v11" stroke="#000" strokeWidth="3" />
        <path d="M33 8V68" stroke="#fff" strokeWidth="5" />
        <g stroke="#f4f2ee" strokeWidth="3" opacity="0.5">
          <path d="M9 10V34M13 8V28M21 8V30" />
        </g>
        <text x="7" y="360" fontFamily="Liberation Serif" fontSize="29" fill="#fff" stroke="#b9b4aa" strokeWidth="1.800" paintOrder="stroke" textLength="90" lengthAdjust="spacingAndGlyphs">
          Google
        </text>
      </svg>
      <div className="absolute top-[10px] right-[9px] flex h-[24px] border border-[#8a8a8a] bg-white text-[17.700px] leading-[23px] shadow-[0_1px_4px_rgba(0,0,0,0.4)]">
        <span className="w-[60px] border-r border-[#8a8a8a] text-center font-medium text-black">Map</span>
        <span className="w-[87px] text-center text-[#5c5c5c]">Satellite</span>
      </div>
      <div className="absolute right-0 bottom-[2px] flex h-[20px] gap-[3px] text-[18px] leading-[20px] whitespace-nowrap text-[#444]">
        <span className="w-[214px] bg-[#f5f5f5]/65 pl-[10px]">Map data ©2015 Google</span>
        <span className="w-[123px] bg-[#f5f5f5]/65 pl-[9px]">Terms of Use</span>
        <span className="w-[168px] bg-[#f5f5f5]/65 pl-[8px]">Report a map error</span>
      </div>
    </div>
  );
}

/* ---------- Page body ---------- */

function Section({ title, children, className }: { title: string; children: React.ReactNode; className: string }) {
  return (
    <section className={className}>
      <div className="-ml-px flex items-center">
        <h2 className="text-[24px] leading-7 font-bold tracking-[-0.050px] text-[#333]">{title}</h2>
        <span className="mt-[1px] ml-[16px] h-[2px] flex-1 bg-[#e8e8e8]" />
      </div>
      <p className="mt-[26px] -ml-px text-[18px] leading-6 text-[#6b6b6b]">{children}</p>
    </section>
  );
}

const toolIcons: React.ReactNode[] = [
  <svg key="a" width="40" height="40" viewBox="0 0 40 40">
    <circle cx="19" cy="19" r="18.500" fill="#505050" />
    <path d="M19 8.500V29.500M8.500 19H29.500" stroke="#fff" strokeWidth="6" />
  </svg>,
  <svg key="b" width="40" height="40" viewBox="0 0 40 40">
    <path d="M9 0V36M15 0V36M21 0V36M27 0V36M33 0V36M2 5.500H38M2 11.500H38M2 17.500H38M2 23.500H38M2 29.500H38" stroke="#c9c9c9" strokeWidth="1.500" />
    <path d="M1.500 0.500V36.500H38" fill="none" stroke="#4a4a4a" strokeWidth="3.200" />
    <path d="M3 35 13.500 23.500 27 17.500 36 4.500" fill="none" stroke="#4a4a4a" strokeWidth="2.600" />
    <circle cx="13.500" cy="23.500" r="3.800" fill="#4a4a4a" />
    <circle cx="27" cy="17.500" r="3.800" fill="#4a4a4a" />
    <circle cx="36" cy="4.500" r="4" fill="#4a4a4a" />
  </svg>,
  <svg key="c" width="40" height="40" viewBox="0 0 40 40">
    <g transform="translate(0.500 3)">
      <path d="M22.500 5.500H6.500Q2 5.500 2 10V25.500Q2 30 6.500 30H21.500Q26 30 26 25.500V19" fill="none" stroke="#505050" strokeWidth="3.200" />
      <path d="M16 17 28.500 4.500 33 9 20.500 21.500zM30 3 32 1.200Q33.500 0 35 1.500L36.300 3.200Q37 4.500 36 5.700L34.300 7.500zM14 18.500 18.800 23 10.500 26z" fill="#505050" />
    </g>
  </svg>,
  <svg key="d" width="40" height="40" viewBox="0 0 40 40">
    <path d="M11.500 0.500H26.500L29.500 15H8.500z" fill="#505050" />
    <path d="M0 11H7L6 17.500H31.500L30.500 11H37V33.500H30L28.500 29H9.500L8 33.500H0z" fill="#505050" />
    <path d="M10 31H28L29 37H9z" fill="#505050" />
    <circle cx="3.500" cy="14" r="1.200" fill="#fff" />
  </svg>,
];
const toolNames = ["Create an event", "Analytics for this event", "Edit this event", "Print Check-in Page"];

function Tools() {
  return (
    <aside className="w-[330px] pt-[33px]">
      <div className="flex items-center">
        <h3 className="text-[21px] leading-6 font-bold tracking-[0.200px] text-[#333]">Tools</h3>
        <span className="ml-[15px] h-[2px] flex-1 bg-[#e8e8e8]" />
      </div>
      <ul className="mt-[40px] ml-[17px]">
        {toolNames.map((n, i) => (
          <li key={n} className="flex h-[74px] items-start">
            {toolIcons[i]}
            <a className="mt-[9px] ml-[15px] text-[18px] leading-6 text-[#2fabf3]">{n}</a>
          </li>
        ))}
      </ul>
    </aside>
  );
}

export default function App() {
  return (
    <div className="h-[1672px] w-[1918px] overflow-hidden bg-white pt-[63px] pl-[112px] font-['Liberation_Sans',Arial,sans-serif]">
      <div className="relative h-[1449px] w-[1694px] rounded-t-[9px] rounded-b-[5px] bg-white shadow-[0_0_0_1px_rgba(0,0,0,0.28),0_54px_90px_rgba(0,0,0,0.5)]">
        <TabStrip />
        <Toolbar />
        <div className="h-[7px] bg-[#434343]" />
        <main className="ml-[142px] w-[1410px]">
          <SiteHeader />
          <Nav />
          <div className="flex justify-between">
            <div className="w-[1066px]">
              <h1 className="mt-[47px] text-[33px] leading-10 font-bold text-[#333]">Final test event (with analytics)</h1>
              <div className="ml-4 w-[1050px]">
                <div className="mt-[39px] flex h-[76px] items-center border-2 border-[#b0da84] bg-[#e9f5e0] pl-[26px] text-[18px] tracking-[0.040px] text-[#5d9732]">
                  You are checked-in for this event.
                </div>
                <Section title="When" className="mt-[32px]">
                  <span className="tracking-[0.090px]">11/11/2013 at 10:05 PM</span>
                </Section>
                <Section title="What" className="mt-[36px]">The event is short and sweet.</Section>
                <Section title="Where" className="mt-[38px]">1935 Corinth, Los Angeles</Section>
                <div className="mt-[26px]">
                  <EventMap />
                </div>
                <div className="mt-[68px] h-[2px] bg-[#e8e8e8]" />
              </div>
            </div>
            <Tools />
          </div>
        </main>
        <div className="absolute bottom-0 left-0 h-[36px] w-[906px] overflow-hidden rounded-tr-[5px] rounded-bl-[5px] border-2 border-[#adadad] bg-[#ebebeb] pl-[6px] text-[24px] leading-[32px] tracking-[0.120px] whitespace-nowrap text-black">
          https://www.socialtagg.com/events/14f3cdc0-4b61-11e3-824b-016b07cb273a/analytics
        </div>
      </div>
    </div>
  );
}
